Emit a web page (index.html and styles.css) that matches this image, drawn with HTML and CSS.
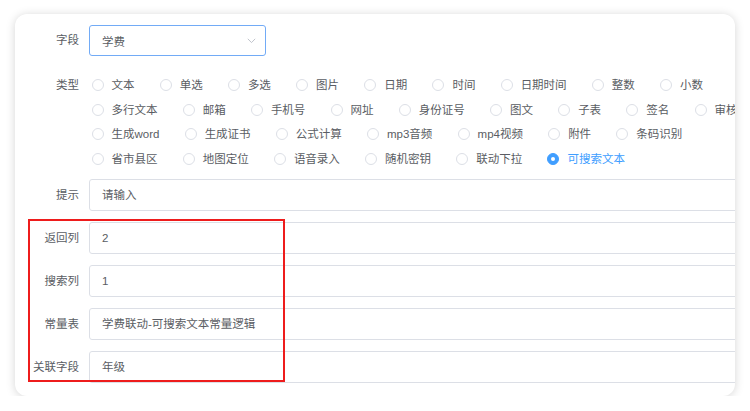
FILE: index.html
```html
<!DOCTYPE html>
<html lang="zh-CN">
<head>
<meta charset="utf-8">
<title>表单</title>
<link rel="stylesheet" href="styles.css">
</head>
<body>
<div class="card">
  <div class="form">
    <div class="item item-select">
      <div class="label">字段</div>
      <div class="select">
        <span class="select-text">学费</span>
        <svg class="chevron" width="9" height="6" viewBox="0 0 9 6"><path d="M0.8 0.8 L4.5 4.6 L8.2 0.8" fill="none" stroke="#c0c4cc" stroke-width="1"/></svg>
      </div>
    </div>
    <div class="item item-radio">
      <div class="label">类型</div>
      <div class="radio-group">
        <label class="radio"><span class="circle"></span><span class="rtext">文本</span></label>
        <label class="radio"><span class="circle"></span><span class="rtext">单选</span></label>
        <label class="radio"><span class="circle"></span><span class="rtext">多选</span></label>
        <label class="radio"><span class="circle"></span><span class="rtext">图片</span></label>
        <label class="radio"><span class="circle"></span><span class="rtext">日期</span></label>
        <label class="radio"><span class="circle"></span><span class="rtext">时间</span></label>
        <label class="radio"><span class="circle"></span><span class="rtext">日期时间</span></label>
        <label class="radio"><span class="circle"></span><span class="rtext">整数</span></label>
        <label class="radio"><span class="circle"></span><span class="rtext">小数</span></label>
        <label class="radio"><span class="circle"></span><span class="rtext">多行文本</span></label>
        <label class="radio"><span class="circle"></span><span class="rtext">邮箱</span></label>
        <label class="radio"><span class="circle"></span><span class="rtext">手机号</span></label>
        <label class="radio"><span class="circle"></span><span class="rtext">网址</span></label>
        <label class="radio"><span class="circle"></span><span class="rtext">身份证号</span></label>
        <label class="radio"><span class="circle"></span><span class="rtext">图文</span></label>
        <label class="radio"><span class="circle"></span><span class="rtext">子表</span></label>
        <label class="radio"><span class="circle"></span><span class="rtext">签名</span></label>
        <label class="radio"><span class="circle"></span><span class="rtext">审核</span></label>
        <label class="radio"><span class="circle"></span><span class="rtext">生成word</span></label>
        <label class="radio"><span class="circle"></span><span class="rtext">生成证书</span></label>
        <label class="radio"><span class="circle"></span><span class="rtext">公式计算</span></label>
        <label class="radio"><span class="circle"></span><span class="rtext">mp3音频</span></label>
        <label class="radio"><span class="circle"></span><span class="rtext">mp4视频</span></label>
        <label class="radio"><span class="circle"></span><span class="rtext">附件</span></label>
        <label class="radio"><span class="circle"></span><span class="rtext">条码识别</span></label>
        <label class="radio"><span class="circle"></span><span class="rtext">省市县区</span></label>
        <label class="radio"><span class="circle"></span><span class="rtext">地图定位</span></label>
        <label class="radio"><span class="circle"></span><span class="rtext">语音录入</span></label>
        <label class="radio"><span class="circle"></span><span class="rtext">随机密钥</span></label>
        <label class="radio"><span class="circle"></span><span class="rtext">联动下拉</span></label>
        <label class="radio checked"><span class="circle"></span><span class="rtext">可搜索文本</span></label>
      </div>
    </div>
    <div class="item item-input first-input">
      <div class="label">提示</div>
      <div class="input">请输入</div>
    </div>
    <div class="item item-input">
      <div class="label">返回列</div>
      <div class="input">2</div>
    </div>
    <div class="item item-input">
      <div class="label">搜索列</div>
      <div class="input">1</div>
    </div>
    <div class="item item-input">
      <div class="label">常量表</div>
      <div class="input">学费联动-可搜索文本常量逻辑</div>
    </div>
    <div class="item item-input">
      <div class="label">关联字段</div>
      <div class="input">年级</div>
    </div>
  </div>
  <div class="highlight"></div>
</div>
</body>
</html>
```

FILE: styles.css
```css
html, body {
  margin: 0;
  padding: 0;
  background: #ffffff;
}
body {
  font-family: "Liberation Sans", "Noto Sans CJK SC", sans-serif;
  font-size: 11.5px;
  color: #5a5d63;
  padding: 14px 15px 0 15px;
}
.card {
  position: relative;
  width: 720px;
  height: 382px;
  border-radius: 12px;
  background: #fff;
  overflow: hidden;
  box-shadow: 0 1px 10px rgba(0, 0, 0, 0.17);
}
.form {
  width: 800px;
  padding-top: 11px;
  display: flex;
  flex-direction: column;
}
.item {
  display: flex;
  align-items: flex-start;
}
.label {
  width: 64px;
  padding-right: 10px;
  text-align: right;
  flex: none;
  color: #5a5d63;
}
.item-select .label {
  line-height: 31px;
}
.select {
  width: 177px;
  height: 31px;
  box-sizing: border-box;
  border: 1px solid #72abf6;
  border-radius: 3px;
  display: flex;
  align-items: center;
  justify-content: space-between;
  padding: 0 9px 0 12px;
}
.select-text {
  color: #5a5d63;
}
.chevron {
  display: block;
  margin-top: 1px;
}
.item-radio {
  margin-top: 17px;
}
.item-radio .label {
  line-height: 24.5px;
}
.radio-group {
  width: 700px;
  padding-left: 2.5px;
  display: flex;
  flex-wrap: wrap;
  line-height: 24.5px;
}
.radio {
  display: inline-flex;
  align-items: center;
  margin-right: 25.2px;
  height: 24.5px;
}
.circle {
  width: 12px;
  height: 12px;
  box-sizing: border-box;
  border: 1px solid #dcdfe6;
  border-radius: 50%;
  background: #fff;
  position: relative;
  flex: none;
}
.rtext {
  padding-left: 8px;
  color: #5a5d63;
}
.radio.checked .circle {
  border-color: #409eff;
  background: #409eff;
}
.radio.checked .circle::after {
  content: "";
  position: absolute;
  width: 4px;
  height: 4px;
  border-radius: 50%;
  background: #fff;
  left: 50%;
  top: 50%;
  transform: translate(-50%, -50%);
}
.radio.checked .rtext {
  color: #409eff;
}
.item-input {
  margin-top: 11px;
}
.item-input.first-input {
  margin-top: 8px;
}
.item-input .label {
  line-height: 32px;
}
.input {
  flex: 1;
  height: 32px;
  box-sizing: border-box;
  border: 1px solid #dcdfe6;
  border-radius: 3px;
  padding: 0 12px;
  line-height: 30px;
  color: #5a5d63;
}
.highlight {
  position: absolute;
  left: 13px;
  top: 205px;
  width: 253px;
  height: 159px;
  border: 2px solid #ee1c1c;
  pointer-events: none;
}
```
